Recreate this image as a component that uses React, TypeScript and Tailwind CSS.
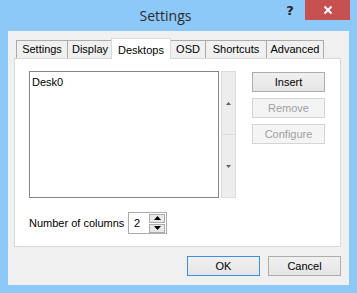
import React from "react";

const ui = { fontFamily: '"Liberation Sans", Arial, sans-serif' };

const tabs = [
  { label: "Settings", width: 51 },
  { label: "Display", width: 45 },
  { label: "Desktops", width: 59 },
  { label: "OSD", width: 35 },
  { label: "Shortcuts", width: 61 },
  { label: "Advanced", width: 58 },
];

function Tab({ label, width, active, last }: { label: string; width: number; active: boolean; last: boolean }) {
  if (active) {
    return (
      <div
        className="h-[21px] -mb-px -mx-px relative z-10 shrink-0 bg-white border border-b-0 border-[#d9d9d9] flex items-start justify-center pt-[3px] text-[11px] text-black"
        style={{ width: width + 1 }}
      >
        {label}
      </div>
    );
  }
  return (
    <div
      className={`h-[18px] shrink-0 bg-[#f0f0f0] border-l border-t border-[#acacac] flex items-center justify-center text-[11px] text-black ${last ? "border-r" : ""}`}
      style={{ width }}
    >
      {label}
    </div>
  );
}

function Btn({ label, disabled, primary }: { label: string; disabled?: boolean; primary?: boolean }) {
  const cls = disabled
    ? "border-[#d5d5d5] bg-[#f4f4f4] text-[#a0a0a0]"
    : primary
    ? "border-[#3c8fe6] bg-gradient-to-b from-[#f0f0f0] to-[#e5e5e5] text-black"
    : "border-[#adadad] bg-gradient-to-b from-[#f0f0f0] to-[#e5e5e5] text-black";
  return (
    <div className={`w-[73px] h-[20px] border flex items-center justify-center text-[11px] ${cls}`}>
      {label}
    </div>
  );
}

export default function App() {
  return (
    <div className="w-[357px] h-[293px] bg-[#8cc8f8] flex flex-col px-[8px] pb-[8px] overflow-hidden" style={ui}>
      {/* Title bar */}
      <div className="h-[31px] flex items-start">
        <div className="flex-1 h-full flex items-center justify-center pl-[44px]">
          <span className="text-[14px] text-[#2b2b2b] -mt-[1px]" style={{ fontFamily: '"Open Sans", sans-serif' }}>
            Settings
          </span>
        </div>
        <div className="w-[22px] h-[20px] flex items-center justify-center text-[13px] font-bold text-[#222] mr-[4px] mt-[1px]" style={{ fontFamily: '"DejaVu Sans", sans-serif' }}>
          ?
        </div>
        <div className="w-[45px] h-[20px] bg-[#c75050] flex items-center justify-center -mr-px">
          <svg width="10" height="10" viewBox="0 0 10 10">
            <path d="M1.5 1.5 L8.5 8.5 M8.5 1.5 L1.5 8.5" stroke="white" strokeWidth="2" />
          </svg>
        </div>
      </div>

      {/* Client area */}
      <div className="flex-1 bg-[#f0f0f0] pl-[6px] pr-[8px] pt-[7px] flex flex-col">
        <div className="flex items-end pl-[2px] h-[20px]">
          {tabs.map((t, i) => (
            <Tab key={t.label} label={t.label} width={t.width} active={t.label === "Desktops"} last={i === tabs.length - 1} />
          ))}
        </div>
        <div className="h-[189px] bg-white border border-[#d9d9d9] pl-[14px] pt-[12px] flex flex-col">
          <div className="flex">
            <div className="w-[190px] h-[127px] border border-[#828790] px-[2px] pt-[2px] text-[11px] text-black">
              Desk0
            </div>
            <div className="w-[15px] h-[127px] ml-[2px] flex flex-col">
              <div className="h-[64px] bg-[#ededed] border border-[#dcdcdc] flex items-center justify-center">
                <svg width="5" height="3" viewBox="0 0 5 3"><path d="M2.5 0 L5 3 L0 3 Z" fill="#606060" /></svg>
              </div>
              <div className="flex-1 bg-[#ededed] border border-t-0 border-[#dcdcdc] flex items-center justify-center">
                <svg width="5" height="3" viewBox="0 0 5 3"><path d="M0 0 L5 0 L2.5 3 Z" fill="#606060" /></svg>
              </div>
            </div>
            <div className="ml-[16px] flex flex-col gap-[6px] pt-[1px]">
              <Btn label="Insert" />
              <Btn label="Remove" disabled />
              <Btn label="Configure" disabled />
            </div>
          </div>
          <div className="flex items-center mt-[14px]">
            <span className="text-[11px] text-black w-[99px]">Number of columns</span>
            <div className="w-[39px] h-[22px] border border-[#abadb3] flex items-center bg-white">
              <span className="text-[11px] text-black pl-[5px] flex-1">2</span>
              <div className="w-[16px] flex flex-col gap-px mr-[1px]">
                <div className="h-[9px] bg-[#e8e8e8] border border-[#acacac] flex items-center justify-center">
                  <svg width="7" height="4" viewBox="0 0 7 4"><path d="M3.5 0 L7 4 L0 4 Z" fill="#000" /></svg>
                </div>
                <div className="h-[9px] bg-[#e8e8e8] border border-[#acacac] flex items-center justify-center">
                  <svg width="7" height="4" viewBox="0 0 7 4"><path d="M0 0 L7 0 L3.5 4 Z" fill="#000" /></svg>
                </div>
              </div>
            </div>
          </div>
        </div>
        <div className="flex justify-end gap-[8px] mt-[9px]">
          <Btn label="OK" primary />
          <Btn label="Cancel" />
        </div>
      </div>
    </div>
  );
}
